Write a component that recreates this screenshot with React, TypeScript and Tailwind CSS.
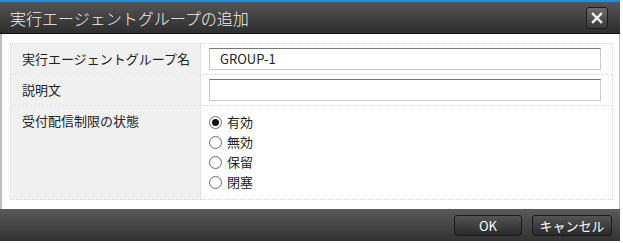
const font = { fontFamily: '"Noto Sans CJK JP", "Liberation Sans", sans-serif' }

const statuses = ['有効', '無効', '保留', '閉塞']

function Radio({ label, checked }: { label: string; checked?: boolean }) {
  return (
    <label className="flex items-center h-[20px] gap-[5px] text-[13px] text-[#222]">
      <span className="w-[13px] h-[13px] rounded-full border border-[#6a6a6a] bg-white flex items-center justify-center">
        {checked && <span className="w-[7px] h-[7px] rounded-full bg-[#111]" />}
      </span>
      {label}
    </label>
  )
}

export default function App() {
  return (
    <div className="w-[623px] h-[243px] bg-white flex flex-col overflow-hidden" style={font}>
      <div className="w-[620px] h-[2px] bg-[#1e8fd8]" />
      <div className="w-[620px] h-[32px] flex items-center justify-between pl-[10px] pr-[12px] bg-gradient-to-b from-[#555555] to-[#2e2e2e] border-b border-[#111]">
        <span className="text-[16px] text-[#f2f2f2] leading-none font-light">実行エージェントグループの追加</span>
        <button className="w-[22px] h-[22px] rounded-[3px] border border-[#1c1c1c] bg-gradient-to-b from-[#6a6a6a] to-[#3a3a3a] flex items-center justify-center">
          <svg width="12" height="12" viewBox="0 0 12 12">
            <path d="M2 2 L10 10 M10 2 L2 10" stroke="#f4f4f4" strokeWidth="2.4" strokeLinecap="square" />
          </svg>
        </button>
      </div>
      <div className="w-[620px] h-[175px] border-l-2 border-r border-[#bdbdbd] pl-[8px] pt-[9px]">
        <div className="w-[603px] border border-dotted border-[#cfcfcf] text-[13px] text-[#222]">
          <div className="flex h-[31px] border-b border-dotted border-[#d4d4d4]">
            <div className="w-[190px] bg-[#f0f0f0] border-r border-dotted border-[#d4d4d4] flex items-center pl-[11px]">
              実行エージェントグループ名
            </div>
            <div className="flex-1 pl-[8px] pr-[11px] flex items-center">
              <div className="w-full h-[22px] border border-[#c8c8c8] border-t-[#777] flex items-center pl-[10px] text-[13px]">
                GROUP-1
              </div>
            </div>
          </div>
          <div className="flex h-[31px] border-b border-dotted border-[#d4d4d4]">
            <div className="w-[190px] bg-[#f0f0f0] border-r border-dotted border-[#d4d4d4] flex items-center pl-[11px]">
              説明文
            </div>
            <div className="flex-1 pl-[8px] pr-[11px] flex items-center">
              <div className="w-full h-[22px] border border-[#c8c8c8] border-t-[#777]" />
            </div>
          </div>
          <div className="flex h-[93px]">
            <div className="w-[190px] bg-[#f0f0f0] border-r border-dotted border-[#d4d4d4] pl-[11px] pt-[5px]">
              受付配信制限の状態
            </div>
            <div className="flex-1 pl-[8px] pt-[6px]">
              {statuses.map((s, i) => (
                <Radio key={s} label={s} checked={i === 0} />
              ))}
            </div>
          </div>
        </div>
      </div>
      <div className="w-[620px] h-[32px] bg-gradient-to-b from-[#5a5a5a] to-[#333333] flex items-center justify-end gap-[10px] pr-[8px]">
        <button className="w-[68px] h-[21px] rounded-[3px] border border-[#1a1a1a] bg-gradient-to-b from-[#555] to-[#2a2a2a] text-[13px] text-white leading-none">
          OK
        </button>
        <button className="w-[80px] h-[21px] rounded-[3px] border border-[#1a1a1a] bg-gradient-to-b from-[#555] to-[#2a2a2a] text-[13px] text-white leading-none">
          キャンセル
        </button>
      </div>
    </div>
  )
}
